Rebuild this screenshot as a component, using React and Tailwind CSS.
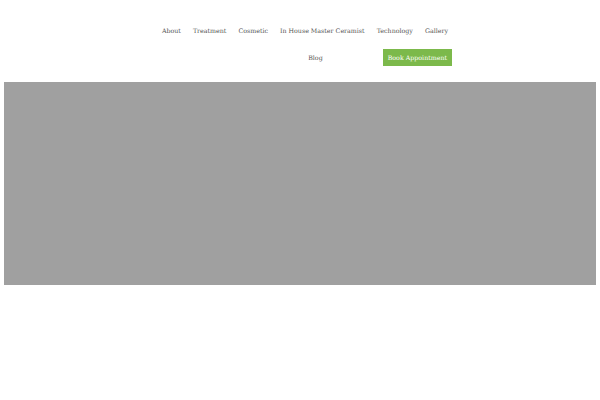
export default function App() {
  const links = ['About', 'Treatment', 'Cosmetic', 'In House Master Ceramist', 'Technology', 'Gallery'];
  return (
    <div className="w-[600px] h-[400px] bg-white font-['DejaVu_Serif',serif] text-[#555]">
      <header className="h-[82px] flex justify-end pr-[146px]">
        <nav className="flex flex-col items-end">
          <ul className="flex pt-[26px] h-[49px] text-[6.3px]">
            {links.map((l) => (
              <li key={l} className="px-[6px] leading-[10px]">
                {l}
              </li>
            ))}
          </ul>
          <div className="flex items-center h-[17px] text-[6.3px] pr-[2px]">
            <span className="leading-[10px]">Blog</span>
            <a className="ml-[60px] h-[17px] px-[5px] flex items-center bg-[#7cb94b] text-white">Book Appointment</a>
          </div>
        </nav>
      </header>
      <div className="mx-[4px] h-[203px] bg-[#a0a0a0]" />
    </div>
  );
}
